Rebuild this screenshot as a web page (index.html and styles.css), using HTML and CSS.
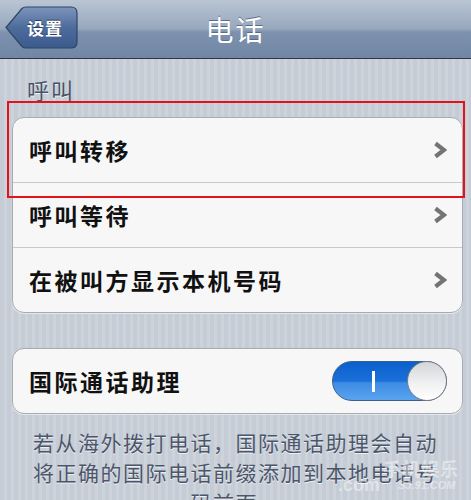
FILE: index.html
```html
<!DOCTYPE html>
<html lang="zh-CN">
<head>
    <meta charset="UTF-8">
    <meta name="viewport" content="width=device-width, initial-scale=1.0">
    <title>电话</title>
    <link rel="stylesheet" href="styles.css">
</head>
<body>
    <div class="navbar">
        <button class="back-btn">
            <svg class="back-shape" width="73" height="43" viewBox="0 0 73 43">
                <defs>
                    <linearGradient id="backGrad" x1="0" y1="0" x2="0" y2="1">
                        <stop offset="0" stop-color="#7d95bb"/>
                        <stop offset="0.5" stop-color="#4d6c9c"/>
                        <stop offset="1" stop-color="#3c5b8d"/>
                    </linearGradient>
                </defs>
                <path d="M1 21.5 L17 2.5 Q18.5 1 21 1 L66 1 Q72 1 72 7 L72 36 Q72 42 66 42 L21 42 Q18.5 42 17 40.5 Z" fill="url(#backGrad)" stroke="#2f4566" stroke-width="1.2"/>
            </svg>
            <span class="back-text">设置</span>
        </button>
        <h1>电话</h1>
    </div>

    <div class="content">
        <div class="section-title">呼叫</div>
        <div class="group">
            <div class="cell">
                <span>呼叫转移</span>
                <svg class="chevron" width="14" height="18" viewBox="0 0 14 18"><path d="M2.5 2.5 L11 9 L2.5 15.5" fill="none" stroke="#747474" stroke-width="4.2"/></svg>
            </div>
            <div class="cell">
                <span>呼叫等待</span>
                <svg class="chevron" width="14" height="18" viewBox="0 0 14 18"><path d="M2.5 2.5 L11 9 L2.5 15.5" fill="none" stroke="#747474" stroke-width="4.2"/></svg>
            </div>
            <div class="cell">
                <span>在被叫方显示本机号码</span>
                <svg class="chevron" width="14" height="18" viewBox="0 0 14 18"><path d="M2.5 2.5 L11 9 L2.5 15.5" fill="none" stroke="#747474" stroke-width="4.2"/></svg>
            </div>
        </div>

        <div class="group group-switch">
            <div class="cell">
                <span>国际通话助理</span>
                <div class="switch">
                    <span class="switch-on"></span>
                    <span class="knob"></span>
                </div>
            </div>
        </div>

        <p class="footer-note">若从海外拨打电话，国际通话助理会自动将正确的国际电话前缀添加到本地电话号码前面。</p>

        <div class="highlight"></div>

        <div class="watermark">
            <span class="wm-cn">手机娱乐</span>
            <span class="wm-com">.com</span>
            <span class="wm-url">SJ.91.COM</span>
        </div>
    </div>
</body>
</html>
```

FILE: styles.css
```css
/* 基础 */
body {
    margin: 0;
    padding: 0;
    font-family: "Noto Sans CJK SC", "Liberation Sans", sans-serif;
    background-color: #c6cdd6;
    background-image: repeating-linear-gradient(90deg, #c5ccd5 0px, #c5ccd5 4px, #ccd3db 4px, #ccd3db 7px);
    height: 500px;
    overflow: hidden;
}

/* 导航栏 */
.navbar {
    height: 58px;
    border-bottom: 1px solid #2e3744;
    background: linear-gradient(#bac5d4, #97a7bd 50%, #7e92ae 55%, #6f86a4);
    display: flex;
    align-items: center;
    justify-content: center;
    position: relative;
}
.navbar h1 {
    margin: 0;
    color: #fff;
    font-size: 28px;
    font-weight: normal;
    letter-spacing: 2px;
    text-shadow: 0 -1px 0 #5a6c86;
}
.back-btn {
    position: absolute;
    left: 5px;
    top: 6px;
    width: 73px;
    height: 43px;
    padding: 0;
    border: none;
    background: none;
    text-align: left;
}
.back-shape {
    position: absolute;
    left: 0;
    top: 0;
}
.back-text {
    position: relative;
    display: block;
    padding-left: 22px;
    color: #fff;
    font-family: "Noto Sans CJK SC", sans-serif;
    font-size: 17px;
    font-weight: bold;
    letter-spacing: 1px;
    text-shadow: 0 -1px 0 #2a3e5e;
}

/* 内容 */
.content {
    position: relative;
}
.section-title {
    padding: 16px 27px 0;
    line-height: 28px;
    font-size: 22px;
    letter-spacing: 2px;
    color: #475166;
    text-shadow: 0 1px 0 #eef1f4;
}
.group {
    margin: 14px 8px 0 12px;
    background-color: #f7f7f7;
    border: 1px solid #a8abb0;
    border-radius: 12px;
    box-shadow: 0 1px 0 #e4e8ec;
}
.group-switch {
    margin-top: 35px;
}
.cell {
    height: 64px;
    display: flex;
    align-items: center;
    justify-content: space-between;
    padding: 0 15px 0 16px;
    border-top: 1px solid #c9c9c9;
    font-size: 23px;
    font-weight: bold;
    letter-spacing: 2.5px;
    color: #111;
}
.cell:first-child {
    border-top: none;
}

/* 开关 */
.switch {
    width: 113px;
    height: 38px;
    border: 1px solid #3d5f8c;
    border-radius: 20px;
    background: linear-gradient(#0c60cc, #1a6fd8 50%, #3d8ce6 55%, #5aa3ee);
    position: relative;
}
.switch-on {
    position: absolute;
    left: 39px;
    top: 9px;
    width: 3px;
    height: 21px;
    background-color: #fff;
}
.knob {
    position: absolute;
    right: -1px;
    top: -1px;
    width: 38px;
    height: 38px;
    border: 1px solid #7a7f86;
    border-radius: 50%;
    background: linear-gradient(#d4d6d9, #f2f2f3 60%, #ffffff);
}

/* 说明文字 */
.footer-note {
    margin: 0;
    padding: 13px 26px 0;
    text-align: center;
    font-size: 21px;
    line-height: 30px;
    letter-spacing: 1.5px;
    color: #4c566b;
    text-shadow: 0 1px 0 #eef1f4;
}

/* 红框标注 */
.highlight {
    position: absolute;
    left: 7px;
    top: 42px;
    width: 454px;
    height: 93px;
    border: 2px solid #e3131b;
}

/* 水印 */
.watermark {
    position: absolute;
    left: 336px;
    top: 400px;
    width: 125px;
    height: 36px;
    color: rgba(255, 255, 255, 0.45);
    font-family: "Liberation Sans", sans-serif;
    font-weight: bold;
}
.wm-cn {
    position: absolute;
    left: 47px;
    top: 0;
    font-family: "Noto Sans CJK SC", sans-serif;
    font-size: 18px;
    line-height: 18px;
    letter-spacing: 1px;
}
.wm-com {
    position: absolute;
    left: 2px;
    top: 17px;
    font-size: 18px;
    line-height: 18px;
}
.wm-url {
    position: absolute;
    left: 62px;
    top: 20px;
    font-size: 11px;
    font-style: italic;
    line-height: 12px;
}
```
